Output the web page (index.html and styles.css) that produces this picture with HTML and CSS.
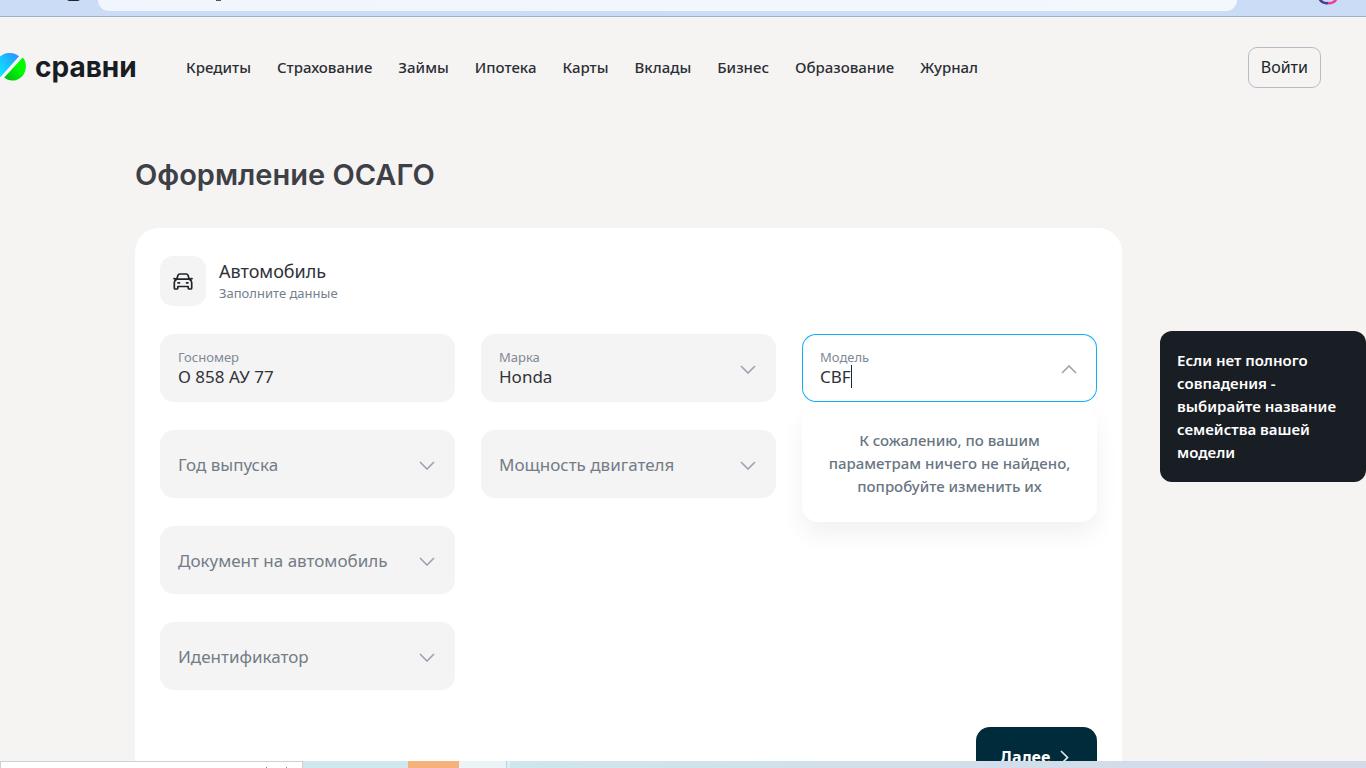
FILE: index.html
```html
<!DOCTYPE html>
<html lang="ru">
<head>
<meta charset="utf-8">
<meta name="viewport" content="width=device-width, initial-scale=1">
<title>Оформление ОСАГО</title>
<link rel="stylesheet" href="styles.css">
</head>
<body>
<div class="browser">
  <div class="toolbar">
    <svg class="toolbar-mark" width="13" height="2" aria-hidden="true"><path d="M0 0h13L11 1H2z" fill="#20242b"/></svg>
    <div class="address">
      <svg width="6" height="1" aria-hidden="true"><path d="M0 0h5v1H0z" fill="#555"/></svg>
    </div>
    <svg class="avatar" width="20" height="5" viewBox="0 0 20 5" aria-hidden="true"><path d="M1-2Q4 4 10 3" fill="none" stroke="#4a3c91" stroke-width="2.5"/><path d="M10 3Q16 4 19-2" fill="none" stroke="#e83e9d" stroke-width="2.5"/></svg>
  </div>
  <div class="page">
    <header class="header">
      <a class="logo" href="#">
        <svg class="logo-mark" width="26" height="28" viewBox="0 0 26 28" aria-hidden="true">
          <defs>
            <linearGradient id="blue" x1="0" y1="1" x2="1" y2="0"><stop offset="0" stop-color="#08edff"/><stop offset="1" stop-color="#2f8dff"/></linearGradient>
            <linearGradient id="green" x1="0" y1="1" x2="1" y2="0"><stop offset="0" stop-color="#04b51c"/><stop offset=".6" stop-color="#00fb00"/></linearGradient>
          </defs>
          <path d="M0 3.600C5-1.200 14-1.200 19 3.300L1 23.600 0 24z" fill="url(#blue)"/>
          <path d="M22.800 4.400C27 9 27 18 22 23.400 17 28.600 9 28.800 4.200 24.600z" fill="url(#green)"/>
        </svg>
        <span>сравни</span>
      </a>
      <nav class="nav" aria-label="Основное меню">
        <a href="#">Кредиты</a><a href="#">Страхование</a><a href="#">Займы</a><a href="#">Ипотека</a><a href="#">Карты</a><a href="#">Вклады</a><a href="#">Бизнес</a><a href="#">Образование</a><a href="#">Журнал</a>
      </nav>
      <button class="login" type="button">Войти</button>
    </header>
    <main class="main">
      <h1>Оформление ОСАГО</h1>
      <div class="columns">
        <form class="card">
          <div class="section-head">
            <span class="section-icon">
              <svg width="20" height="17" viewBox="0 0 20 17" fill="none" stroke="#20242b" stroke-width="1.7" stroke-linecap="round" stroke-linejoin="round" aria-hidden="true"><path d="M3.700 6.200 5 2.200Q5.400 1 6.600 1h6.800q1.200 0 1.600 1.200l1.300 4M1 5.700l2.700.5h12.600l2.700-.5M3.700 6.200Q1.300 7.600 1.300 9.600V15q0 1 1 1h1.500q1 0 1-1v-1.500h10.400V15q0 1 1 1h1.500q1 0 1-1V9.600q0-2-2.400-3.400M5 9.800h1.500M13.500 9.800H15"/></svg>
            </span>
            <div>
              <h2>Автомобиль</h2>
              <p>Заполните данные</p>
            </div>
          </div>
          <div class="fields">
            <div class="field">
              <div class="field-text">
                <label for="plate">Госномер</label>
                <input id="plate" type="text" value="О 858 АУ 77">
              </div>
            </div>
            <div class="field">
              <div class="field-text">
                <label for="brand">Марка</label>
                <select id="brand"><option>Honda</option></select>
              </div>
              <svg class="chevron" viewBox="0 0 16 9" aria-hidden="true"><path d="m1 1 7 7 7-7"/></svg>
            </div>
            <div class="field active">
              <div class="field-text">
                <label for="model">Модель</label>
                <div class="typed"><input id="model" type="text" value="CBF"><span class="caret"></span></div>
              </div>
              <svg class="chevron" viewBox="0 0 16 9" aria-hidden="true"><path d="m1 8 7-7 7 7"/></svg>
              <div class="dropdown" role="status">К сожалению, по вашим параметрам ничего не найдено, попробуйте изменить их</div>
            </div>
            <div class="field empty">
              <label for="year">Год выпуска</label>
              <select id="year"><option></option></select>
              <svg class="chevron" viewBox="0 0 16 9" aria-hidden="true"><path d="m1 1 7 7 7-7"/></svg>
            </div>
            <div class="field empty">
              <label for="power">Мощность двигателя</label>
              <select id="power"><option></option></select>
              <svg class="chevron" viewBox="0 0 16 9" aria-hidden="true"><path d="m1 1 7 7 7-7"/></svg>
            </div>
            <div class="field empty first">
              <label for="document">Документ на автомобиль</label>
              <select id="document"><option></option></select>
              <svg class="chevron" viewBox="0 0 16 9" aria-hidden="true"><path d="m1 1 7 7 7-7"/></svg>
            </div>
            <div class="field empty first">
              <label for="ident">Идентификатор</label>
              <select id="ident"><option></option></select>
              <svg class="chevron" viewBox="0 0 16 9" aria-hidden="true"><path d="m1 1 7 7 7-7"/></svg>
            </div>
          </div>
          <button class="next" type="submit">Далее
            <svg width="9" height="15" viewBox="0 0 9 15" fill="none" stroke="#dfe6ea" stroke-width="1.7" aria-hidden="true"><path d="m1 1 6.500 6.500L1 14"/></svg>
          </button>
        </form>
        <aside class="hint">Если нет полного совпадения - выбирайте название семейства вашей модели</aside>
      </div>
    </main>
  </div>
  <div class="taskbar" aria-hidden="true">
    <span class="search-box"><i></i><i></i></span><span class="tile-blue"></span><span class="tile-orange"></span><span class="tile-pale"></span><span class="tile-rest"></span>
  </div>
</div>
</body>
</html>
```
FILE: styles.css
```css
* { box-sizing: border-box; }
body { margin: 0; font-family: "Noto Sans", sans-serif; color: #20242b; }
h1, h2, p { margin: 0; }
a { color: inherit; text-decoration: none; }
svg { display: block; flex: none; }
button, input, select { font: inherit; color: inherit; }
.browser { height: 100vh; display: flex; flex-direction: column; overflow: hidden; background: #f6f4f2; }

.toolbar { flex: none; height: 17px; display: flex; align-items: flex-start; background: #cbdcf6; border-bottom: 1px solid #9fb0cb; padding: 0 28px 0 67px; }
.toolbar-mark { margin-right: 18px; }
.address { flex: 1; height: 11px; padding-left: 118px; background: linear-gradient(90deg, #f1f5fd, #f3f8fd); border-radius: 0 0 18px 18px; }
.avatar { margin-left: 81px; }

.page { flex: 1; min-height: 0; overflow: hidden; }
.header { display: flex; align-items: center; height: 100px; padding-right: 45px; }
.logo { display: flex; align-items: center; gap: 9px; width: 186px; font: 700 28px/32px Inter, sans-serif; color: #181d24; }
.nav { display: flex; gap: 26px; font-size: 15px; font-weight: 500; line-height: 24px; color: #2b2f36; }
.login { margin-left: auto; height: 41px; padding: 0 12px; border: 1px solid #b4bcc6; border-radius: 9px; background: transparent; font-size: 16px; }

.main { padding-left: 135px; }
h1 { padding-top: 36px; font: 600 29px/44px Inter, sans-serif; color: #3e4047; }
.columns { display: grid; grid-template-columns: minmax(0, 1fr) 206px; gap: 38px; margin-top: 31px; align-items: start; }
.card { padding: 28px 25px; background: #fff; border-radius: 24px; }
.section-head { display: flex; align-items: center; gap: 13px; }
.section-icon { display: grid; place-items: center; width: 46px; height: 50px; border-radius: 13px; background: #f4f4f4; }
h2 { font-size: 18px; font-weight: 400; line-height: 24px; color: #303238; }
.section-head p { font-size: 13px; line-height: 20px; color: #76808c; }

.fields { display: grid; grid-template-columns: repeat(3, minmax(0, 1fr)); gap: 28px 26px; margin-top: 28px; }
.field { position: relative; display: flex; align-items: center; height: 68px; padding: 2px 20px 0 18px; background: #f4f4f4; border-radius: 14px; }
.field-text { flex: 1; min-width: 0; }
.field label { display: block; font-size: 13px; line-height: 16px; color: #808995; }
.field input, .field select { display: block; width: 100%; height: 24px; padding: 0; border: 0; outline: 0; background: transparent; appearance: none; font-size: 17px; line-height: 24px; color: #303238; }
.field.empty label { flex: 1; font-size: 17px; line-height: 24px; color: #737c87; }
.field.empty select { position: absolute; inset: 0; height: 100%; }
.first { grid-column: 1; }
.chevron { width: 16px; height: 9px; fill: none; stroke: #9ba3ae; stroke-width: 1.6; }
.active { background: #fff; box-shadow: inset 0 0 0 1px #13aefa; }
.typed { display: flex; }
.typed input { width: auto; field-sizing: content; }
.caret { width: 1px; height: 23px; background: #20242b; }
.dropdown { position: absolute; top: 73px; left: 0; right: 0; padding: 22px 20px 24px; border-radius: 16px; background: #fff; box-shadow: 0 12px 24px rgba(0, 0, 0, .06); text-align: center; font-size: 15px; font-weight: 500; line-height: 23px; color: #697582; }
.next { display: flex; align-items: center; justify-content: center; gap: 10px; width: 121px; height: 60px; margin: 37px 0 0 auto; padding: 0 4px 0 0; border: 0; border-radius: 14px; background: #002b3a; color: #fff; font-size: 16px; font-weight: 700; }
.hint { margin-top: 103px; padding: 18px 17px; background: #191e24; border-radius: 12px; color: #fff; font-size: 15px; font-weight: 600; line-height: 23px; }

.taskbar { flex: none; height: 7px; display: flex; background: #d0e7ee; }
.search-box { display: flex; justify-content: flex-end; gap: 19px; width: 303px; padding: 5px 15px 0; background: #fff; border: 1px solid #cdd1d4; border-bottom: 0; }
.search-box i { width: 1px; height: 1px; background: #888; }
.tile-blue { width: 105px; background: #cfe7ed; }
.tile-orange { width: 51px; background: #f6b27b; }
.tile-pale { width: 48px; background: #eaf4f7; border-right: 1px solid #c3d0d8; }
.tile-rest { flex: 1; border-left: 3px solid #dfeef3; background: linear-gradient(90deg, #cfe6ee, #d2deeb 55%, #d3dae8); }
```
